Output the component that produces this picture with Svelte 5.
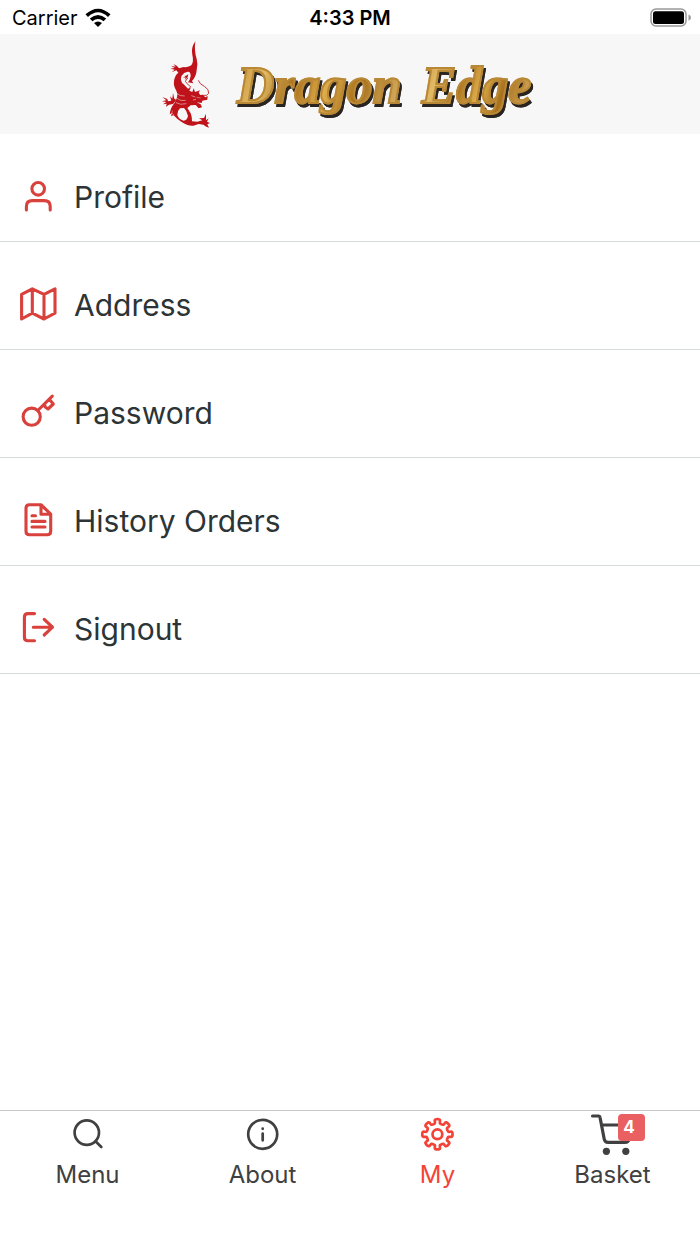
<script lang="ts">
  type Item = { id: string; label: string };

  const items: Item[] = [
    { id: "profile", label: "Profile" },
    { id: "address", label: "Address" },
    { id: "password", label: "Password" },
    { id: "orders", label: "History Orders" },
    { id: "signout", label: "Signout" },
  ];

  const tabs: Item[] = [
    { id: "menu", label: "Menu" },
    { id: "about", label: "About" },
    { id: "my", label: "My" },
    { id: "basket", label: "Basket" },
  ];

  let active = $state("my");
  let basketCount = $state(4);

  // Outline of the eight toothed gear
  function gear(cx: number, cy: number) {
    const points: string[] = [];
    for (let i = 0; i < 160; i++) {
      const t = (i / 160) * Math.PI * 2;
      const a = t + 0.055 * Math.sin(16 * t);
      const r = 13 + 2.4 * Math.tanh(1.4 * Math.cos(8 * t));
      points.push(
        `${(cx + r * Math.cos(a)).toFixed(2)},${(cy + r * Math.sin(a)).toFixed(2)}`,
      );
    }
    return points.join(" ");
  }
</script>

<div class="app">
  <div class="status">
    <div class="carrier">
      <span>Carrier</span>
      <svg class="wifi" viewBox="0 0 26 20">
        <path d="M0.5 6.3Q13-5 25.5 6.3L23 9Q13-0.3 3 9Z" />
        <path d="M4.8 10.6Q13 3.6 21.2 10.6L18.6 13.3Q13 8.7 7.4 13.3Z" />
        <path d="M9 15Q13 12 17 15L13 19Z" />
      </svg>
    </div>
    <span class="clock">4:33 PM</span>
    <svg class="battery" viewBox="0 0 42 20">
      <rect x="1" y="1" width="35" height="17" rx="5" fill="none" stroke="#999" stroke-width="1.5" />
      <rect x="3" y="3.3" width="31" height="12.6" rx="2.5" />
      <path d="M38.5 6.5Q41 7.3 41 9.5T38.5 12.7Z" fill="#999" />
    </svg>
  </div>

  <header>
    <svg class="dragon" viewBox="0 0 210 312" fill="#c0121a">
      <path
        d="M133 22Q119 42 124 63Q129 84 121 94Q112 101 98 99L84 103L77 95L67 90L74 98L60 95L71 102L58 104L71 107L62 115L76 109L82 116Q71 124 69 142Q67 157 76 170Q81 178 78 190Q76 199 70 208Q58 222 56 241L63 236L60 246L68 244Q79 257 92 264Q108 276 127 275L143 270L157 272L166 278L174 281L169 271L177 267L168 263L173 253L165 259L165 239L159 252L144 253L154 259L139 263L123 262Q124 251 119 238L109 222L119 214L134 213L143 223L153 220L149 211L137 205L152 207L154 200L169 197L170 186L163 190L155 182L147 183L143 175L148 169L132 174L128 163L124 174L115 170L119 162L111 164L98 151Q85 140 92 125Q98 115 110 113Q119 112 119 126Q117 138 111 145L127 148L123 141Q136 127 137 109Q142 91 137 75Q129 50 133 22ZM99 222Q108 230 111 246Q108 260 98 260Q82 255 79 243Q79 230 87 223Z"
        fill-rule="evenodd"
      />
      <path d="M66 210L54 212L45 218L47 209L36 211L46 204L33 202L46 199L34 189L49 195L51 202L61 200L57 187L64 194L66 177L70 194L76 198Z" />
      <path
        d="M103 126L110 132L103 142L112 153L119 158L112 167M142 139Q146 151 160 157Q175 166 173 178Q169 187 155 184"
        fill="none"
        stroke="#c0121a"
        stroke-width="2.5"
      />
      <path d="M104 126l-8 5 8-1-3 8 9-9 2-8z" />
      <path d="M77 178Q87 187 101 186M78 192Q87 202 104 199M75 206Q88 214 106 209M121 185l12 4M126 198l9-2" fill="none" stroke="#f7f7f7" stroke-width="1.5" />
      <path d="M64 230q-4 7 4 13M137 190l12 2" fill="none" stroke="#e79a9a" stroke-width="2" />
    </svg>
    <h1 class="brand"><span>Dragon</span><span>Edge</span></h1>
  </header>

  <main>
    {#each items as item (item.id)}
      <button class="row">
        <svg class="icon" viewBox="0 0 40 40">
          {#if item.id === "profile"}
            <circle cx="20.2" cy="11.8" r="6.3" />
            <path d="M8.4 33V29.5Q8.4 23.6 14.4 23.6H26.2Q32.2 23.6 32.2 29.5V33" />
          {:else if item.id === "address"}
            <path d="M3.6 9.4L14.3 3.8L26 9.4L37 3.8V28.2L26 34L14.3 28.2L3.6 34ZM14.3 3.8V28.2M26 9.4V34" />
          {:else if item.id === "password"}
            <circle cx="13.7" cy="23.7" r="8.6" />
            <path d="M19.8 17.5L34.3 3.2M26.5 11L27.2 14L30 16L35.3 11L31.5 6.5" />
          {:else if item.id === "orders"}
            <path
              d="M11.5 3.7H23L32.7 13.2V30.2Q32.7 33.8 29.2 33.8H11.5Q8 33.8 8 30.2V7.2Q8 3.7 11.5 3.7ZM23 3.7V13.2H32.7M14 14.8H17.5M14 20.4H27M14 26H27"
            />
          {:else}
            <path d="M16.5 4.6H10Q6.4 4.6 6.4 8.2V28.2Q6.4 31.8 10 31.8H16.5M15.3 18.2H34.5M26.2 10.3L34.5 18.2L26.2 26" />
          {/if}
        </svg>
        <span>{item.label}</span>
      </button>
    {/each}
  </main>

  <nav>
    {#each tabs as tab (tab.id)}
      <button
        class="tab"
        class:active={active === tab.id}
        onclick={() => {
          active = tab.id;
        }}
      >
        <span class="glyph">
          <svg viewBox="0 0 48 48">
            {#if tab.id === "menu"}
              <circle cx="22.8" cy="21.6" r="12.2" />
              <path d="M31.5 30.3L37.3 36" />
            {:else if tab.id === "about"}
              <circle cx="23.7" cy="23.3" r="14.5" />
              <path d="M23.7 22.6V29.3M23.7 17.7V17.8" />
            {:else if tab.id === "my"}
              <circle cx="23.4" cy="23.3" r="4.9" />
              <polygon points={gear(23.4, 23.3)} />
            {:else}
              <path class="cart" d="M3.5 5H9.8Q10.8 5 11 6.3L15.2 28Q15.8 31.4 19 31.4H36Q39.5 31.4 40.2 28L43 14H12.8" />
              <circle class="wheel" cx="17.4" cy="40.3" r="3.6" />
              <circle class="wheel" cx="36.8" cy="40.3" r="3.6" />
            {/if}
          </svg>
          {#if tab.id === "basket" && basketCount > 0}
            <span class="badge">{basketCount}</span>
          {/if}
        </span>
        <span>{tab.label}</span>
      </button>
    {/each}
  </nav>
</div>

<style>
  :global(body) {
    margin: 0;
    background-color: #fff;
  }

  .app {
    display: flex;
    flex-direction: column;
    min-height: 100vh;
    font-family: Inter, "Liberation Sans", sans-serif;
    color: #2d3436;
  }

  .status {
    display: grid;
    grid-template-columns: 1fr auto 1fr;
    align-items: center;
    box-sizing: border-box;
    height: 34px;
    padding: 2px 8px 0;
    color: #000;
    font-size: 20px;
  }

  .carrier {
    display: flex;
    align-items: center;
    gap: 7px;
    padding-left: 4px;
  }

  .wifi {
    width: 26px;
    height: 20px;
  }

  .clock {
    font-weight: 600;
  }

  .battery {
    width: 42px;
    height: 20px;
    justify-self: end;
  }

  header {
    display: flex;
    justify-content: center;
    align-items: center;
    gap: 16px;
    box-sizing: border-box;
    height: 100px;
    padding: 4px 18px 0 0;
    background-color: #f7f7f7;
  }

  .dragon {
    width: 70px;
    height: 104px;
  }

  .brand {
    display: flex;
    gap: 20px;
    margin: 0;
    font-family: "Liberation Serif", serif;
    font-size: 52px;
    font-style: italic;
    font-weight: 700;
    line-height: 60px;
    filter: drop-shadow(2px 3px 0 #2a2520);
  }

  .brand span {
    color: transparent;
    background: linear-gradient(110deg, #c58f35, #e2bb66 18%, #a8701c 36%, #dfae4a 54%, #a8701c 72%, #dcb96c);
    background-clip: text;
    -webkit-text-stroke: 2px #b98836;
  }

  main {
    flex-grow: 1;
  }

  button {
    border: none;
    background: none;
    color: inherit;
    font-family: inherit;
    cursor: pointer;
  }

  svg {
    flex-shrink: 0;
  }

  .row {
    display: flex;
    align-items: center;
    gap: 16px;
    box-sizing: border-box;
    width: 100%;
    height: 108px;
    padding: 18px 18px 0;
    border-bottom: 1px solid #d5dbdd;
    font-size: 30px;
    text-align: left;
  }

  .icon {
    width: 40px;
    height: 40px;
    fill: none;
    stroke: #d9413c;
    stroke-width: 3.1;
    stroke-linecap: round;
    stroke-linejoin: round;
  }

  nav {
    display: grid;
    grid-template-columns: repeat(4, 1fr);
    height: 133px;
    border-top: 1px solid #c8c8c8;
  }

  .tab {
    display: flex;
    flex-direction: column;
    align-items: center;
    padding: 0;
    color: #404040;
    font-size: 24px;
    line-height: 32px;
  }

  .tab.active {
    color: #f44336;
  }

  .glyph {
    position: relative;
    width: 48px;
    height: 48px;
  }

  .glyph svg {
    display: block;
    fill: none;
    stroke: currentColor;
    stroke-width: 2.7;
    stroke-linecap: round;
    stroke-linejoin: round;
  }

  .glyph .cart {
    stroke-width: 3.2;
  }

  .glyph .wheel {
    fill: currentColor;
    stroke: none;
  }

  .badge {
    position: absolute;
    top: 3px;
    right: -8px;
    box-sizing: border-box;
    width: 27px;
    padding-right: 4px;
    border-radius: 4px;
    background-color: #ea6062;
    color: #fff;
    font-size: 17px;
    font-weight: 700;
    line-height: 27px;
    text-align: center;
  }
</style>
